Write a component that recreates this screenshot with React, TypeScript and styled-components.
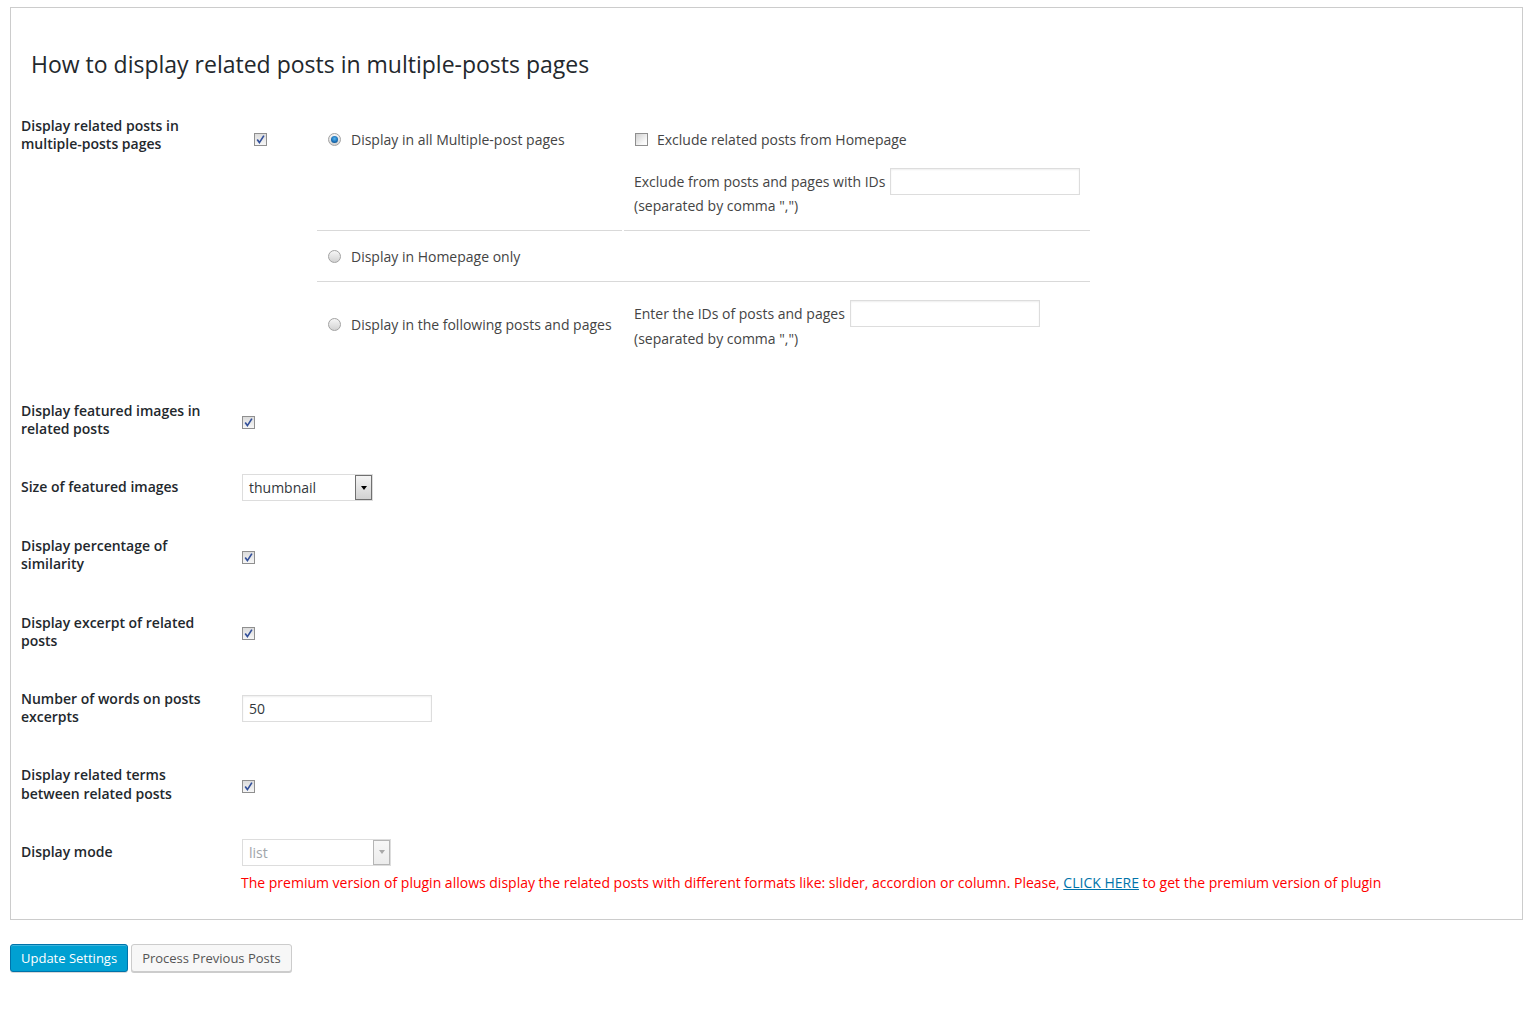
import React, { FC, ReactNode } from "react";
import styled, { createGlobalStyle, css } from "styled-components";

const GlobalStyle = createGlobalStyle`
  body {
    margin: 0;
    background: #fff;
    font-family: "Open Sans", "Liberation Sans", sans-serif;
    font-size: 14px;
    color: #444;
  }
`;

const Page = styled.div`
  padding: 7px 9px 40px 10px;
`;

const Panel = styled.div`
  border: 1px solid #ccc;
  background: #fff;
  padding: 0 10px 12px 10px;
`;

const Title = styled.h2`
  margin: 42px 0 17px 10px;
  font-size: 23px;
  font-weight: 400;
  line-height: 29.9px;
  color: #23282d;
`;

const Row = styled.div`
  display: flex;
  align-items: stretch;
`;

const Th = styled.div`
  flex: none;
  width: 200px;
  padding: 20px 10px 20px 0;
  font-weight: 600;
  line-height: 1.3;
  color: #23282d;
`;

const Td = styled.div<{ $top?: boolean; $column?: boolean }>`
  flex: 1;
  display: flex;
  flex-direction: ${(p) => (p.$column ? "column" : "row")};
  align-items: ${(p) => (p.$top || p.$column ? "flex-start" : "center")};
  padding: 15px 10px 15px ${(p) => (p.$top ? 10 : 11)}px;
  line-height: 1.3;
`;

const Box = styled.span<{ $nudge?: number; $checked?: boolean }>`
  flex: none;
  position: relative;
  display: inline-block;
  width: 13px;
  height: 13px;
  box-sizing: border-box;
  border: 1px solid #8f8f8f;
  background: ${(p) =>
    p.$checked
      ? "linear-gradient(#dcdcdc, #f6f6f6)"
      : "linear-gradient(135deg, #cfcfcf, #f7f7f7 70%, #fff)"};
  margin-top: ${(p) => p.$nudge ?? 0}px;

  svg {
    position: absolute;
    left: 0;
    top: 0;
  }
`;

const Checkbox: FC<{ checked?: boolean; nudge?: number }> = ({
  checked,
  nudge,
}) => (
  <Box $nudge={nudge} $checked={checked}>
    {checked && (
      <svg width="11" height="11" viewBox="0 0 11 11">
        <path
          d="M2.2 5.6 L4.4 8.6 L8.9 1.6"
          fill="none"
          stroke="#33509a"
          strokeWidth="1.7"
        />
      </svg>
    )}
  </Box>
);

const RadioCircle = styled.span<{ $checked?: boolean }>`
  flex: none;
  position: relative;
  display: inline-block;
  width: 13px;
  height: 13px;
  box-sizing: border-box;
  border-radius: 50%;
  border: 1px solid #a2a2a2;
  background: linear-gradient(#f6f6f6, #d2d2d2);

  ${(p) =>
    p.$checked &&
    css`
      &::after {
        content: "";
        position: absolute;
        left: 2px;
        top: 2px;
        width: 7px;
        height: 7px;
        border-radius: 50%;
        background: radial-gradient(circle at 50% 40%, #58b6ee 0, #1a70b8 55%, #0c3d6c 100%);
      }
    `}
`;

const Choice = styled.label`
  display: flex;
  align-items: center;
  gap: 10px;
  height: 21px;
  line-height: 21px;
  color: #444;
  white-space: nowrap;
`;

const CheckCell = styled.div`
  flex: none;
  width: 76px;
  box-sizing: border-box;
  padding: 20px 0 0 13px;
`;

const OptionsGrid = styled.div`
  display: grid;
  grid-template-columns: 305px 466px;
  column-gap: 2px;
`;

const OptionCell = styled.div<{ $pad: string; $line?: boolean; $wide?: boolean }>`
  display: flex;
  flex-direction: column;
  justify-content: ${(p) => (p.$wide ? "center" : "flex-start")};
  padding: ${(p) => p.$pad};
  border-bottom: 1px solid ${(p) => (p.$line ? "#d9d9d9" : "transparent")};
  grid-column: ${(p) => (p.$wide ? "1 / span 2" : "auto")};
`;

const RadioCell = styled(OptionCell)<{ $middle?: boolean }>`
  padding-left: 11px;
  justify-content: ${(p) => (p.$middle ? "center" : "flex-start")};
`;

const ExtraCell = styled(OptionCell)`
  padding-left: 10px;
`;

const Line = styled.div<{ $gap?: number }>`
  display: flex;
  align-items: center;
  gap: 5px;
  min-height: 21px;
  line-height: 21px;
  margin-top: ${(p) => p.$gap ?? 0}px;
  white-space: nowrap;
`;

const ExcludeChoice = styled(Choice)`
  gap: 9px;
  padding-left: 1px;
`;

const TextInput = styled.div<{ $width: number }>`
  box-sizing: border-box;
  width: ${(p) => p.$width}px;
  height: 27px;
  padding: 0 6px;
  border: 1px solid #ddd;
  box-shadow: inset 0 1px 2px rgba(0, 0, 0, 0.07);
  background: #fff;
  color: #32373c;
  line-height: 25px;
`;

const SelectBox = styled.div<{ $width: number; $disabled?: boolean }>`
  box-sizing: border-box;
  display: flex;
  align-items: stretch;
  width: ${(p) => p.$width}px;
  height: 27px;
  margin: 1px 0;
  border: 1px solid #ddd;
  background: #fff;
  color: ${(p) => (p.$disabled ? "#a0a5aa" : "#32373c")};
`;

const SelectValue = styled.span`
  flex: 1;
  padding-left: 6px;
  line-height: 25px;
`;

const SelectButton = styled.span<{ $disabled?: boolean }>`
  flex: none;
  display: flex;
  align-items: center;
  justify-content: center;
  width: 17px;
  box-sizing: border-box;
  border: 1px solid ${(p) => (p.$disabled ? "#b5b5b5" : "#707070")};
  background: ${(p) =>
    p.$disabled
      ? "linear-gradient(#f7f7f7, #ececec)"
      : "linear-gradient(#f4f4f4, #d2d2d2)"};

  &::after {
    content: "";
    border-left: 3.5px solid transparent;
    border-right: 3.5px solid transparent;
    border-top: 4px solid ${(p) => (p.$disabled ? "#a8a8a8" : "#000")};
  }
`;

const Select: FC<{ value: string; width: number; disabled?: boolean }> = ({
  value,
  width,
  disabled,
}) => (
  <SelectBox $width={width} $disabled={disabled}>
    <SelectValue>{value}</SelectValue>
    <SelectButton $disabled={disabled} />
  </SelectBox>
);

const PremiumNote = styled.div`
  margin: 7px 0 0 -1px;
  color: #f00;
  white-space: nowrap;

  a {
    color: #0073aa;
    text-decoration: underline;
  }
`;

const Actions = styled.div`
  display: flex;
  gap: 3px;
  margin-top: 24px;
`;

const Button = styled.button<{ $primary?: boolean }>`
  height: 28px;
  padding: 0 10px;
  border-radius: 3px;
  font-family: "Open Sans", "Liberation Sans", sans-serif;
  font-size: 13px;
  line-height: 26px;
  cursor: pointer;
  border: 1px solid ${(p) => (p.$primary ? "#0073aa" : "#ccc")};
  background: ${(p) => (p.$primary ? "#00a0d2" : "#f7f7f7")};
  color: ${(p) => (p.$primary ? "#fff" : "#555")};
  box-shadow: ${(p) =>
    p.$primary
      ? "inset 0 1px 0 rgba(120, 200, 230, 0.5), 0 1px 0 rgba(0, 0, 0, 0.15)"
      : "0 1px 0 #ccc"};
`;

type Setting = { label: ReactNode; control: ReactNode; column?: boolean };

const settings: Setting[] = [
  { label: "Display featured images in related posts", control: <Checkbox checked nudge={4} /> },
  { label: "Size of featured images", control: <Select value="thumbnail" width={131} /> },
  { label: "Display percentage of similarity", control: <Checkbox checked nudge={4} /> },
  { label: "Display excerpt of related posts", control: <Checkbox checked nudge={4} /> },
  { label: "Number of words on posts excerpts", control: <TextInput $width={190}>50</TextInput> },
  { label: "Display related terms between related posts", control: <Checkbox checked nudge={4} /> },
  {
    label: "Display mode",
    column: true,
    control: (
      <>
        <Select value="list" width={149} disabled />
        <PremiumNote>
          The premium version of plugin allows display the related posts with different
          formats like: slider, accordion or column. Please, <a href="#">CLICK HERE</a> to
          get the premium version of plugin
        </PremiumNote>
      </>
    ),
  },
];

const App: FC = () => (
  <Page>
    <GlobalStyle />
    <Panel>
      <Title>How to display related posts in multiple-posts pages</Title>

      <Row>
        <Th>Display related posts in multiple-posts pages</Th>
        <Td $top>
          <CheckCell>
            <Checkbox checked />
          </CheckCell>
          <OptionsGrid>
            <RadioCell $pad="17px 10px 14px" $line>
              <Choice>
                <RadioCircle $checked />
                Display in all Multiple-post pages
              </Choice>
            </RadioCell>
            <ExtraCell $pad="17px 10px 14px" $line>
              <ExcludeChoice>
                <Checkbox />
                Exclude related posts from Homepage
              </ExcludeChoice>
              <Line $gap={18}>
                Exclude from posts and pages with IDs
                <TextInput $width={190} />
              </Line>
              <Line>(separated by comma ",")</Line>
            </ExtraCell>
            <RadioCell $pad="15px 10px 14px" $line $wide>
              <Choice>
                <RadioCircle />
                Display in Homepage only
              </Choice>
            </RadioCell>
            <RadioCell $pad="18px 10px 17px" $middle>
              <Choice>
                <RadioCircle />
                Display in the following posts and pages
              </Choice>
            </RadioCell>
            <ExtraCell $pad="18px 10px 17px">
              <Line>
                Enter the IDs of posts and pages
                <TextInput $width={190} />
              </Line>
              <Line $gap={1}>(separated by comma ",")</Line>
            </ExtraCell>
          </OptionsGrid>
        </Td>
      </Row>

      {settings.map((s, i) => (
        <Row key={i}>
          <Th>{s.label}</Th>
          <Td $column={s.column}>{s.control}</Td>
        </Row>
      ))}
    </Panel>

    <Actions>
      <Button $primary>Update Settings</Button>
      <Button>Process Previous Posts</Button>
    </Actions>
  </Page>
);

export default App;
